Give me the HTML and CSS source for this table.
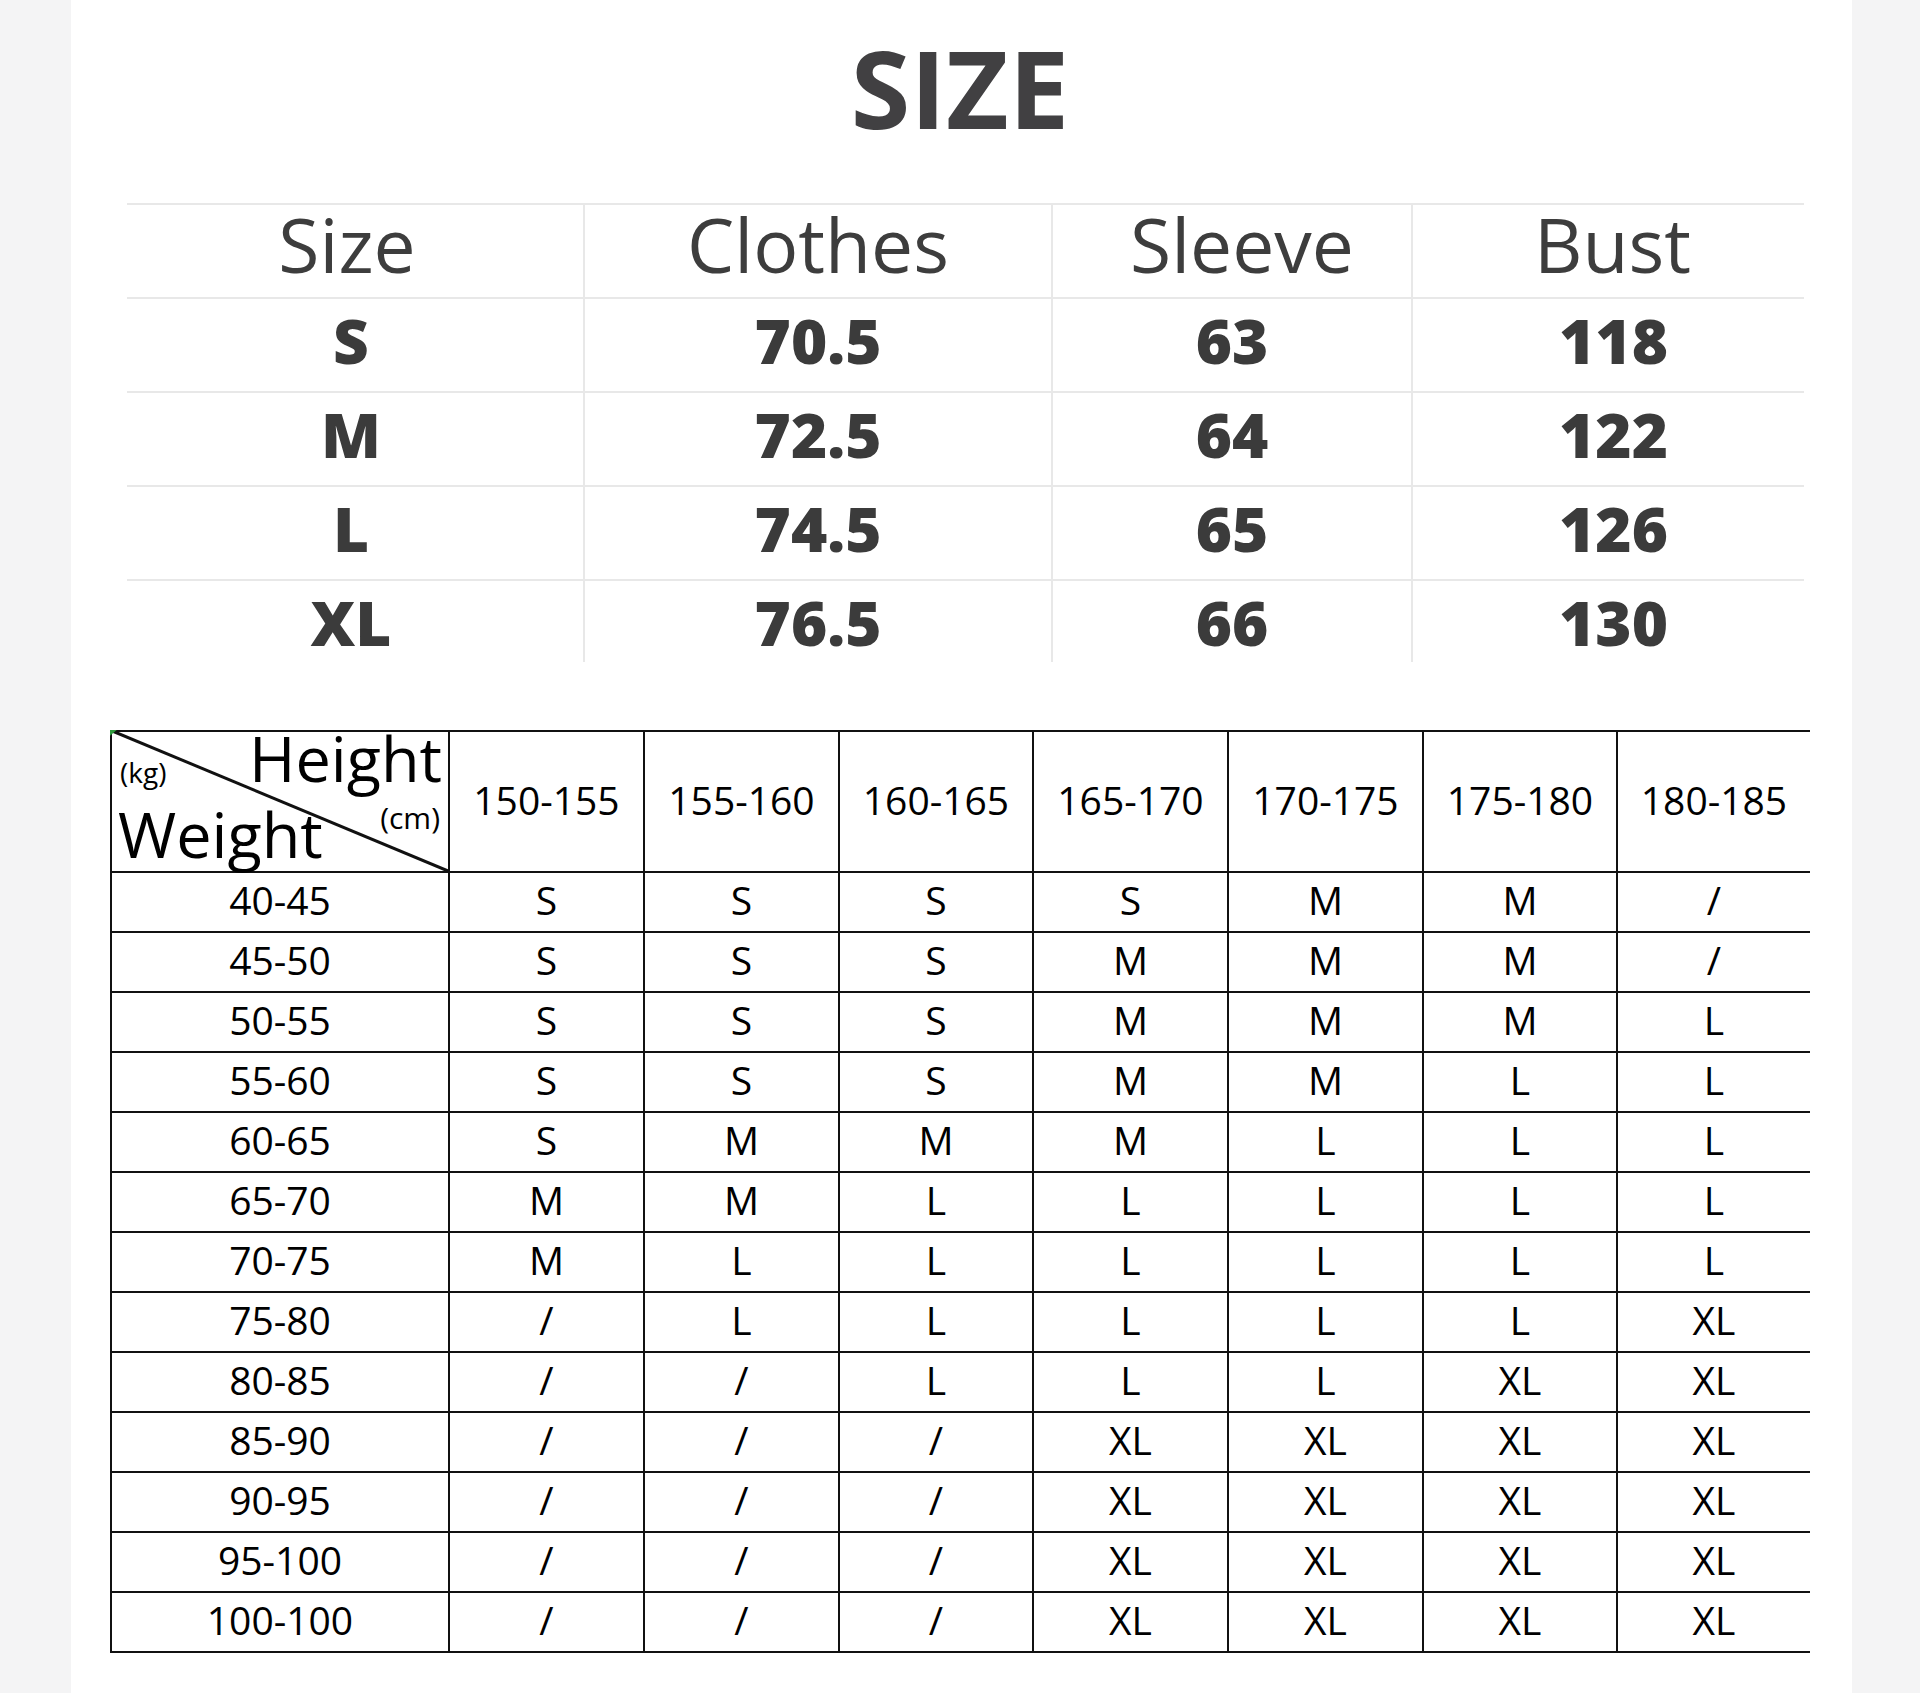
FILE: index.html
```html
<!DOCTYPE html>
<html lang="en">
<head>
<meta charset="utf-8">
<title>SIZE</title>
<link rel="stylesheet" href="styles.css">
</head>
<body>
<div class="page">
  <h1 class="title">SIZE</h1>

  <div class="measure">
    <div class="cell head first">Size</div>
    <div class="cell head">Clothes</div>
    <div class="cell head sleeve">Sleeve</div>
    <div class="cell head bust">Bust</div>

    <div class="cell val first">S</div>
    <div class="cell val">70.5</div>
    <div class="cell val">63</div>
    <div class="cell val bust">118</div>

    <div class="cell val first">M</div>
    <div class="cell val">72.5</div>
    <div class="cell val">64</div>
    <div class="cell val bust">122</div>

    <div class="cell val first">L</div>
    <div class="cell val">74.5</div>
    <div class="cell val">65</div>
    <div class="cell val bust">126</div>

    <div class="cell val first">XL</div>
    <div class="cell val">76.5</div>
    <div class="cell val">66</div>
    <div class="cell val bust">130</div>
  </div>

  <div class="fit">
    <div class="c corner">
      <svg class="diag" viewBox="0 0 100 100" preserveAspectRatio="none" aria-hidden="true">
        <line x1="0" y1="0" x2="100" y2="100" stroke="#111" stroke-width="3" vector-effect="non-scaling-stroke"/>
        <polygon points="0,0 2,0 0,4" fill="#2e9a3c"/>
      </svg>
      <span class="lbl height">Height</span>
      <span class="lbl kg">(kg)</span>
      <span class="lbl cm">(cm)</span>
      <span class="lbl weight">Weight</span>
    </div>
    <div class="c">150-155</div>
    <div class="c">155-160</div>
    <div class="c">160-165</div>
    <div class="c">165-170</div>
    <div class="c">170-175</div>
    <div class="c">175-180</div>
    <div class="c">180-185</div>

    <div class="c">40-45</div><div class="c">S</div><div class="c">S</div><div class="c">S</div><div class="c">S</div><div class="c">M</div><div class="c">M</div><div class="c">/</div>
    <div class="c">45-50</div><div class="c">S</div><div class="c">S</div><div class="c">S</div><div class="c">M</div><div class="c">M</div><div class="c">M</div><div class="c">/</div>
    <div class="c">50-55</div><div class="c">S</div><div class="c">S</div><div class="c">S</div><div class="c">M</div><div class="c">M</div><div class="c">M</div><div class="c">L</div>
    <div class="c">55-60</div><div class="c">S</div><div class="c">S</div><div class="c">S</div><div class="c">M</div><div class="c">M</div><div class="c">L</div><div class="c">L</div>
    <div class="c">60-65</div><div class="c">S</div><div class="c">M</div><div class="c">M</div><div class="c">M</div><div class="c">L</div><div class="c">L</div><div class="c">L</div>
    <div class="c">65-70</div><div class="c">M</div><div class="c">M</div><div class="c">L</div><div class="c">L</div><div class="c">L</div><div class="c">L</div><div class="c">L</div>
    <div class="c">70-75</div><div class="c">M</div><div class="c">L</div><div class="c">L</div><div class="c">L</div><div class="c">L</div><div class="c">L</div><div class="c">L</div>
    <div class="c">75-80</div><div class="c">/</div><div class="c">L</div><div class="c">L</div><div class="c">L</div><div class="c">L</div><div class="c">L</div><div class="c">XL</div>
    <div class="c">80-85</div><div class="c">/</div><div class="c">/</div><div class="c">L</div><div class="c">L</div><div class="c">L</div><div class="c">XL</div><div class="c">XL</div>
    <div class="c">85-90</div><div class="c">/</div><div class="c">/</div><div class="c">/</div><div class="c">XL</div><div class="c">XL</div><div class="c">XL</div><div class="c">XL</div>
    <div class="c">90-95</div><div class="c">/</div><div class="c">/</div><div class="c">/</div><div class="c">XL</div><div class="c">XL</div><div class="c">XL</div><div class="c">XL</div>
    <div class="c">95-100</div><div class="c">/</div><div class="c">/</div><div class="c">/</div><div class="c">XL</div><div class="c">XL</div><div class="c">XL</div><div class="c">XL</div>
    <div class="c">100-100</div><div class="c">/</div><div class="c">/</div><div class="c">/</div><div class="c">XL</div><div class="c">XL</div><div class="c">XL</div><div class="c">XL</div>
  </div>
</div>
</body>
</html>
```

FILE: styles.css
```css
* {
  box-sizing: border-box;
}

body {
  margin: 0;
  background: #f4f4f5;
  font-family: "Open Sans", "Noto Sans", sans-serif;
}

.page {
  margin-left: 71px;
  width: 1781px;
  min-height: 1693px;
  background: #ffffff;
  padding-top: 34px;
}

.title {
  margin: 0;
  padding-right: 3px;
  text-align: center;
  font-size: 108px;
  line-height: 108px;
  font-weight: 700;
  color: #414042;
}

/* ---------- measurement table ---------- */
.measure {
  margin: 61px 0 0 56px;
  width: 1677px;
  display: grid;
  grid-template-columns: 456px 468px 360px 393px;
  grid-template-rows: 94px 94px 94px 94px 83px;
}

.cell {
  border-top: 2px solid #e8e8e8;
  border-left: 2px solid #e8e8e8;
  display: flex;
  justify-content: center;
  align-items: flex-start;
  color: #3b3b3b;
}

.cell.first {
  border-left: none;
}

.head {
  font-size: 75px;
  line-height: 75px;
  font-weight: 400;
  padding-top: 2px;
  color: #3d3d3d;
}

.head.first {
  padding-right: 16px;
}

.head.sleeve {
  padding-left: 20px;
}

.head.bust {
  padding-left: 8px;
}

.val {
  font-size: 62px;
  line-height: 62px;
  font-weight: 800;
  padding-top: 10px;
}

.val.first {
  padding-right: 8px;
}

.val.bust {
  padding-left: 10px;
}

/* ---------- fit table ---------- */
.fit {
  margin: 68px 0 0 39px;
  width: 1700px;
  display: grid;
  grid-template-columns: 338px 195px 195px 194px 195px 195px 194px 194px;
  grid-template-rows: 141px;
  grid-auto-rows: 60px;
  border-bottom: 2px solid #111111;
}

.c {
  border-top: 2px solid #111111;
  border-left: 2px solid #111111;
  display: flex;
  justify-content: center;
  align-items: center;
  padding-bottom: 5px;
  font-size: 39px;
  line-height: 39px;
  color: #000000;
}

.corner {
  position: relative;
  padding: 0;
}

.diag {
  position: absolute;
  left: -2px;
  top: -2px;
  width: calc(100% + 2px);
  height: calc(100% + 2px);
}

.lbl {
  position: absolute;
  color: #000000;
  white-space: nowrap;
}

.height {
  right: 6px;
  top: 3px;
  font-size: 63px;
  line-height: 46px;
}

.weight {
  left: 6px;
  top: 79px;
  font-size: 63px;
  line-height: 46px;
}

.kg {
  left: 8px;
  top: 29px;
  font-size: 28px;
  line-height: 22px;
}

.cm {
  right: 8px;
  top: 74px;
  font-size: 30px;
  line-height: 24px;
}
```
